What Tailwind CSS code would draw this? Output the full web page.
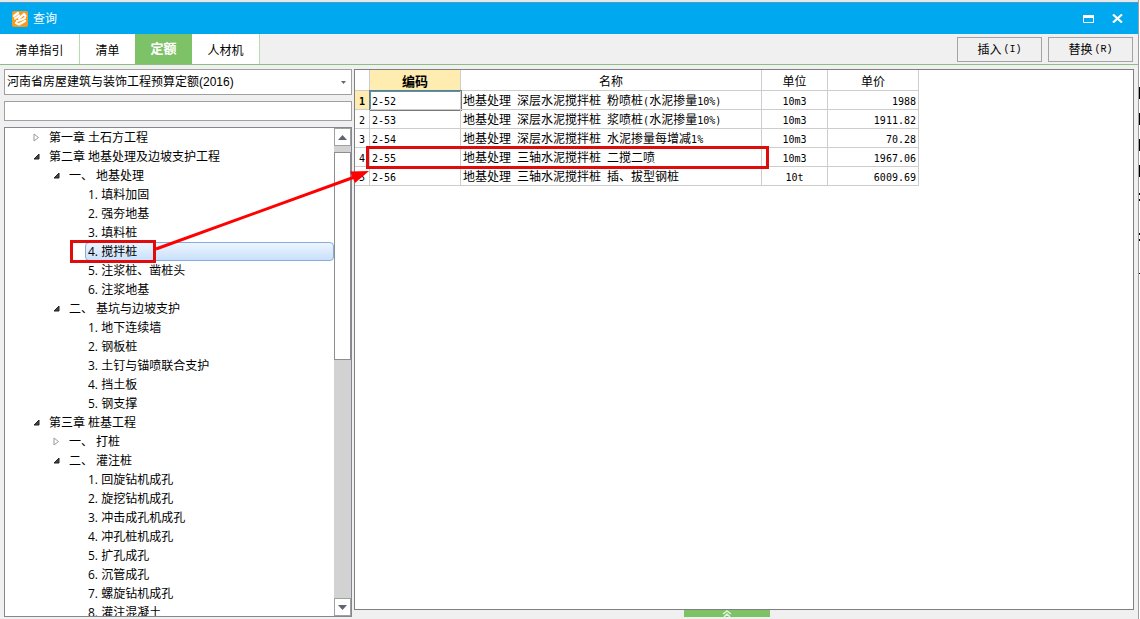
<!DOCTYPE html>
<html lang="zh-CN">
<head>
<meta charset="utf-8">
<title>查询</title>
<script src="https://cdn.jsdelivr.net/npm/@tailwindcss/browser@4"></script>
</head>
<body class="relative flex h-screen overflow-hidden bg-[#f0f0f0] text-xs text-black font-['Liberation_Sans','Noto_Sans_CJK_SC',sans-serif]">
<div class="flex min-w-0 flex-1 flex-col border-t-2 border-[#e4e8ea]">
  <header class="flex h-8 shrink-0 items-center border-t border-[#4a9cc4] bg-[#00a8f0] pl-3 pr-[9px] text-white">
    <svg class="size-4" viewBox="0 0 16 16" aria-hidden="true">
      <rect width="16" height="16" rx="2" fill="#f49b22"/>
      <path d="M2 5l4-3M3 7.500c2-1 3-2 4-3M7 7.500l5-4.500M12 3l1.500 2M5 10c3 0 6-2 8-3M4 12l3 1.500 6-3.500" fill="none" stroke="#fff" stroke-width="2.200" stroke-linecap="round" stroke-linejoin="round"/>
    </svg>
    <h1 class="ml-[5px] flex-1">查询</h1>
    <button aria-label="最大化" class="flex size-6 items-center justify-center"><svg width="11" height="8" viewBox="0 0 11 8"><path d="M.5 .5h10v7H.5z" fill="none" stroke="#fff"/><path d="M0 0h11v3H0z" fill="#fff"/></svg></button>
    <button aria-label="关闭" class="ml-[5px] flex size-6 items-center justify-center"><svg width="11" height="9" viewBox="0 0 11 9"><path d="M1 .5l9 8M10 .5l-9 8" stroke="#fff" stroke-width="2.2"/></svg></button>
  </header>
  <nav class="flex h-[31px] shrink-0 border-b border-[#8dbf84]">
    <button class="w-20 border-r border-[#b5dcae] bg-white pt-[4px]">清单指引</button>
    <button class="w-[55px] bg-white pt-[4px]">清单</button>
    <button class="w-[57px] bg-[#7dc267] text-[13px] font-bold text-white">定额</button>
    <button class="w-[68px] border-r border-[#b5dcae] bg-white pt-[4px]">人材机</button>
    <div class="flex flex-1 items-center justify-end gap-[6px] pr-[5px]">
      <button class="flex h-[25px] w-[85px] items-center justify-center gap-[2px] border border-[#a3a3a3] pt-[2px]">插入<span class="font-['Liberation_Mono',monospace] text-[10px]">(I)</span></button>
      <button class="flex h-[25px] w-[85px] items-center justify-center gap-[2px] border border-[#a3a3a3] pt-[2px]">替换<span class="font-['Liberation_Mono',monospace] text-[10px]">(R)</span></button>
    </div>
  </nav>
  <main class="flex min-h-0 flex-1 gap-[2px] pl-1 pr-1 pt-1">
    <aside class="flex w-[348px] shrink-0 flex-col pb-[2px]">
      <div class="relative shrink-0">
        <select aria-label="定额库" class="block h-[26px] w-full appearance-none border border-[#a0a0a0] bg-white pl-[2px]"><option>河南省房屋建筑与装饰工程预算定额(2016)</option></select>
        <svg class="pointer-events-none absolute right-[6px] top-3" width="5" height="3"><path d="M0 0h5L2.5 3z" fill="#666"/></svg>
      </div>
      <input type="text" aria-label="搜索" class="mt-[6px] h-5 shrink-0 border border-[#a0a0a0] bg-white px-1">
      <div class="mt-[6px] flex min-h-0 flex-1 border border-[#828790] bg-white">
        <ul class="min-w-0 flex-1 overflow-hidden font-['Open_Sans','Noto_Sans_CJK_SC',sans-serif] leading-[19px] [&_button]:flex [&_button]:w-4 [&_button]:shrink-0 [&_li]:flex [&_li]:h-[19px] [&_li]:items-center [&_li]:whitespace-pre">
          <li class="pl-7"><button aria-label="展开"><svg width="7" height="9"><path d="M1 1v7l4.500-3.500z" fill="#fff" stroke="#999"/></svg></button>第一章 土石方工程</li>
          <li class="pl-7"><button aria-label="折叠"><svg width="7" height="7"><path d="M6 1v5h-5z" fill="#444" stroke="#222"/></svg></button>第二章 地基处理及边坡支护工程</li>
          <li class="pl-12"><button aria-label="折叠"><svg width="7" height="7"><path d="M6 1v5h-5z" fill="#444" stroke="#222"/></svg></button>一、 地基处理</li>
          <li class="pl-[83px]">1. 填料加固</li>
          <li class="pl-[83px]">2. 强夯地基</li>
          <li class="pl-[83px]">3. 填料桩</li>
          <li class="ml-20 rounded-sm border border-[#84acdd] bg-linear-to-b from-[#edf5ff] to-[#c9e0fb] pl-[2px]">4. 搅拌桩</li>
          <li class="pl-[83px]">5. 注浆桩、凿桩头</li>
          <li class="pl-[83px]">6. 注浆地基</li>
          <li class="pl-12"><button aria-label="折叠"><svg width="7" height="7"><path d="M6 1v5h-5z" fill="#444" stroke="#222"/></svg></button>二、 基坑与边坡支护</li>
          <li class="pl-[83px]">1. 地下连续墙</li>
          <li class="pl-[83px]">2. 钢板桩</li>
          <li class="pl-[83px]">3. 土钉与锚喷联合支护</li>
          <li class="pl-[83px]">4. 挡土板</li>
          <li class="pl-[83px]">5. 钢支撑</li>
          <li class="pl-7"><button aria-label="折叠"><svg width="7" height="7"><path d="M6 1v5h-5z" fill="#444" stroke="#222"/></svg></button>第三章 桩基工程</li>
          <li class="pl-12"><button aria-label="展开"><svg width="7" height="9"><path d="M1 1v7l4.500-3.500z" fill="#fff" stroke="#999"/></svg></button>一、 打桩</li>
          <li class="pl-12"><button aria-label="折叠"><svg width="7" height="7"><path d="M6 1v5h-5z" fill="#444" stroke="#222"/></svg></button>二、 灌注桩</li>
          <li class="pl-[83px]">1. 回旋钻机成孔</li>
          <li class="pl-[83px]">2. 旋挖钻机成孔</li>
          <li class="pl-[83px]">3. 冲击成孔机成孔</li>
          <li class="pl-[83px]">4. 冲孔桩机成孔</li>
          <li class="pl-[83px]">5. 扩孔成孔</li>
          <li class="pl-[83px]">6. 沉管成孔</li>
          <li class="pl-[83px]">7. 螺旋钻机成孔</li>
          <li class="pl-[83px]">8. 灌注混凝土</li>
        </ul>
        <div class="flex w-[17px] shrink-0 flex-col bg-[#d2d2d2]">
          <button aria-label="向上滚动" class="flex h-[18px] items-center justify-center border border-[#a0a0a0] bg-white"><svg width="9" height="5"><path d="M0 5h9L4.500 0z" fill="#606470"/></svg></button>
          <div class="mt-[6px] h-52 border border-[#8e8e8e] bg-white"></div>
          <button aria-label="向下滚动" class="mt-auto flex h-[18px] items-center justify-center border border-[#a0a0a0] bg-white"><svg width="9" height="5"><path d="M0 0h9L4.500 5z" fill="#606470"/></svg></button>
        </div>
      </div>
    </aside>
    <section class="flex min-w-0 flex-1 flex-col">
      <div class="min-h-0 flex-1 overflow-hidden border border-[#7e7e84] bg-white">
        <table class="w-[564px] table-fixed border-separate border-spacing-0 whitespace-pre leading-[14px] [&_td]:h-[19px] [&_td]:border-b [&_td]:border-r [&_td]:border-[#cdcdcd] [&_td]:p-0 [&_td]:pt-[3px] [&_th]:h-[21px] [&_th]:border-b [&_th]:border-r [&_th]:border-[#cdcdcd] [&_th]:p-0 [&_th]:pt-[3px] [&_th]:font-normal [&_span]:font-['DejaVu_Sans_Mono',monospace] [&_span]:text-[10px]">
          <colgroup><col class="w-[15px]"><col class="w-[91px]"><col class="w-[301px]"><col class="w-[66px]"><col class="w-[91px]"></colgroup>
          <thead><tr><th></th><th class="bg-[#ffecb0]"><b class="text-[13px]">编码</b></th><th>名称</th><th>单位</th><th>单价</th></tr></thead>
          <tbody>
            <tr><td class="bg-[#ffecb0] text-center font-bold"><span>1</span></td><td class="pl-[2px]! shadow-[inset_1px_1px_0_#3c9dc0,0_0_0_1px_#777]"><span>2-52</span></td><td class="pl-[2px]!">地基处理<span> </span>深层水泥搅拌桩<span> </span>粉喷桩<span>(</span>水泥掺量<span>10%)</span></td><td class="text-center"><span>10m3</span></td><td class="pr-[2px]! text-right"><span>1988</span></td></tr>
            <tr><td class="text-center"><span>2</span></td><td class="pl-[2px]!"><span>2-53</span></td><td class="pl-[2px]!">地基处理<span> </span>深层水泥搅拌桩<span> </span>浆喷桩<span>(</span>水泥掺量<span>10%)</span></td><td class="text-center"><span>10m3</span></td><td class="pr-[2px]! text-right"><span>1911.82</span></td></tr>
            <tr><td class="text-center"><span>3</span></td><td class="pl-[2px]!"><span>2-54</span></td><td class="pl-[2px]!">地基处理<span> </span>深层水泥搅拌桩<span> </span>水泥掺量每增减<span>1%</span></td><td class="text-center"><span>10m3</span></td><td class="pr-[2px]! text-right"><span>70.28</span></td></tr>
            <tr><td class="text-center"><span>4</span></td><td class="pl-[2px]!"><span>2-55</span></td><td class="pl-[2px]!">地基处理<span> </span>三轴水泥搅拌桩<span> </span>二搅二喷</td><td class="text-center"><span>10m3</span></td><td class="pr-[2px]! text-right"><span>1967.06</span></td></tr>
            <tr><td class="text-center"><span>5</span></td><td class="pl-[2px]!"><span>2-56</span></td><td class="pl-[2px]!">地基处理<span> </span>三轴水泥搅拌桩<span> </span>插、拔型钢桩</td><td class="text-center"><span>10t</span></td><td class="pr-[2px]! text-right"><span>6009.69</span></td></tr>
          </tbody>
        </table>
      </div>
      <div class="h-[9px] shrink-0 pl-[330px]">
        <button aria-label="展开面板" class="flex h-[7px] w-[86px] items-center justify-center bg-[#7dc267]"><svg width="10" height="7"><path d="M1 4l4-3 4 3M2 7l3-3 3 3" fill="none" stroke="#e2f6dc" stroke-width="1.500"/></svg></button>
      </div>
    </section>
  </main>
</div>
<div class="w-[2px] shrink-0 border-l border-[#a0a0a0] bg-white pt-[87px]" aria-hidden="true">
  <div class="h-3 bg-black"></div><div class="mt-[14px] h-3 bg-black"></div><div class="mt-[14px] h-3 bg-black"></div><div class="mt-[14px] h-3 bg-black"></div>
  <div class="mt-4 h-2 border-y-2 border-black"></div><div class="mt-8 h-2 border-y-2 border-black"></div><div class="mt-8 h-px bg-black"></div>
</div>
<svg class="pointer-events-none absolute left-0 top-0" width="780" height="280" aria-hidden="true">
  <g fill="none" stroke="#e00b0b" stroke-width="3"><path d="M71.500 241.500h83v20h-83zM367.500 147.500h400v20h-400z"/><path d="M156 249L356 176.500" stroke="#f00" /></g>
  <path d="M369 171L350 171.500L355 183z" fill="#f00"/>
</svg>
</body>
</html>
